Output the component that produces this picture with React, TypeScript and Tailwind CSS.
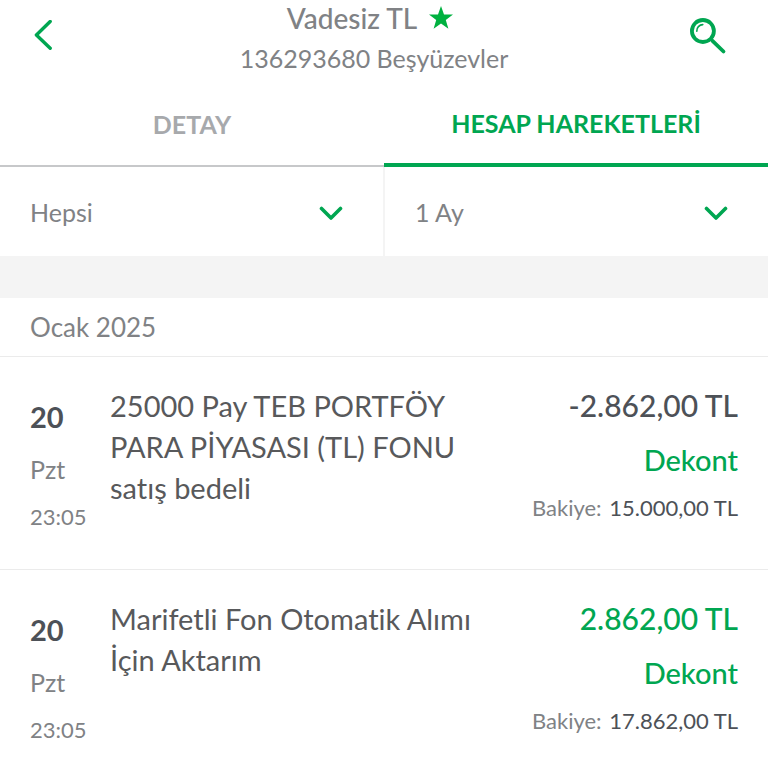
import React, { useState } from 'react';

interface Transaction {
  id: number;
  day: string;
  weekday: string;
  time: string;
  description: string;
  amount: string;
  incoming: boolean;
  balance: string;
}

const transactions: Transaction[] = [
  {
    id: 1,
    day: '20',
    weekday: 'Pzt',
    time: '23:05',
    description: '25000 Pay TEB PORTFÖY PARA PİYASASI (TL) FONU satış bedeli',
    amount: '-2.862,00 TL',
    incoming: false,
    balance: '15.000,00 TL',
  },
  {
    id: 2,
    day: '20',
    weekday: 'Pzt',
    time: '23:05',
    description: 'Marifetli Fon Otomatik Alımı İçin Aktarım',
    amount: '2.862,00 TL',
    incoming: true,
    balance: '17.862,00 TL',
  },
];

function BackIcon() {
  return (
    <svg className="w-5 h-8" viewBox="0 0 20 32" fill="none" stroke="currentColor" strokeWidth="3.4" strokeLinecap="round" strokeLinejoin="round">
      <path d="M18.2 1.5 4.4 15 18.2 28.2" />
    </svg>
  );
}

function SearchIcon() {
  return (
    <svg className="w-10 h-10" viewBox="0 0 40 40" fill="none" stroke="currentColor" strokeLinecap="round">
      <circle cx="14.9" cy="15" r="11" strokeWidth="3.8" />
      <path d="M8.8 15.2a6.2 6.2 0 0 1 6-6.6" strokeWidth="1.6" />
      <path d="M24.5 24.8 35.5 35.5" strokeWidth="3.8" />
    </svg>
  );
}

function StarIcon() {
  return (
    <svg className="w-6 h-6" viewBox="0 0 24 24" fill="currentColor">
      <path d="M12 0 15 8.6H24L16.8 14 19.4 22.8 12 17.6 4.6 22.8 7.2 14 0 8.6H9Z" />
    </svg>
  );
}

function ChevronIcon() {
  return (
    <svg className="w-6 h-4" viewBox="0 0 24 16" fill="none" stroke="currentColor" strokeWidth="3.6" strokeLinecap="round" strokeLinejoin="round">
      <path d="M2.5 2.5 12 12 21.5 2.5" />
    </svg>
  );
}

interface FilterProps {
  id: string;
  label: string;
  options: string[];
}

function Filter({ id, label, options }: FilterProps) {
  return (
    <div className="relative flex-1 flex items-center">
      <select
        id={id}
        aria-label={label}
        className="w-full px-7.5 pt-[25px] pb-6 appearance-none bg-transparent text-[25px] leading-10 text-[#808285] focus:outline-none"
      >
        {options.map((option) => (
          <option key={option}>{option}</option>
        ))}
      </select>
      <label htmlFor={id} className="absolute right-10 pt-1 pointer-events-none text-[#00a651]">
        <ChevronIcon />
      </label>
    </div>
  );
}

function TransactionRow({ item }: { item: Transaction }) {
  return (
    <li className="flex px-7.5 pt-7 pb-8 border-b border-[#ebebeb]">
      <div className="w-20 shrink-0 pt-3 text-[#808285]">
        <p className="mb-3 text-[29px] leading-10 font-bold text-[#4d5157]">{item.day}</p>
        <p className="mb-2 text-[25px] leading-10">{item.weekday}</p>
        <p className="text-[22px] leading-10">{item.time}</p>
      </div>
      <p className="flex-1 text-[29px] leading-[41px] text-[#58595b]">{item.description}</p>
      <div className="w-60 shrink-0 text-right">
        <p className={`mb-[15px] text-[30px] leading-10 font-medium ${item.incoming ? 'text-[#00a651]' : 'text-[#4d5157]'}`}>
          {item.amount}
        </p>
        <button type="button" className="mb-2 text-[29px] leading-10 font-medium text-[#00a651]">
          Dekont
        </button>
        <p className="text-[22px] leading-10 text-[#808285]">
          Bakiye: <span className="ml-0.5 text-[#4d5157]">{item.balance}</span>
        </p>
      </div>
    </li>
  );
}

export default function App() {
  const [tab, setTab] = useState('movements');

  const tabClass = (name: string) =>
    `flex-1 pt-1 text-[25px] font-bold ${
      tab === name ? 'border-b-4 border-[#00a651] text-[#00a651]' : 'border-b-2 border-[#c7c8ca] text-[#a7a9ac]'
    }`;

  return (
    <div className="min-h-screen bg-white font-['Lato','Liberation_Sans',sans-serif] [font-variant-ligatures:none]">
      <header className="flex items-start justify-between px-8">
        <button type="button" aria-label="Geri" className="w-7 pt-5 text-[#00a651]">
          <BackIcon />
        </button>
        <div className="text-center text-[#808285]">
          <h1 className="flex items-center justify-center gap-3 pr-2 text-[28px] leading-9 font-medium">
            Vadesiz TL
            <span className="text-[#00b140]">
              <StarIcon />
            </span>
          </h1>
          <p className="pt-1 text-[25px] leading-9">136293680 Beşyüzevler</p>
        </div>
        <button type="button" aria-label="Ara" className="w-12 pt-4 text-[#00a651]">
          <SearchIcon />
        </button>
      </header>

      <nav className="flex h-[91px] pt-1">
        <button type="button" className={tabClass('details')} onClick={() => setTab('details')}>
          DETAY
        </button>
        <button type="button" className={tabClass('movements')} onClick={() => setTab('movements')}>
          HESAP HAREKETLERİ
        </button>
      </nav>

      <div className="flex divide-x-2 divide-[#f4f4f4]">
        <Filter id="type" label="İşlem türü" options={['Hepsi', 'Gelen', 'Giden']} />
        <Filter id="period" label="Dönem" options={['1 Ay', '3 Ay', '6 Ay']} />
      </div>

      <div className="h-[42px] bg-[#f4f4f4]" />

      <h2 className="px-7.5 py-0.5 text-[26px] leading-[54px] text-[#808285] border-b border-[#ebebeb]">Ocak 2025</h2>
      <ul>
        {transactions.map((item) => (
          <TransactionRow key={item.id} item={item} />
        ))}
      </ul>
    </div>
  );
}
